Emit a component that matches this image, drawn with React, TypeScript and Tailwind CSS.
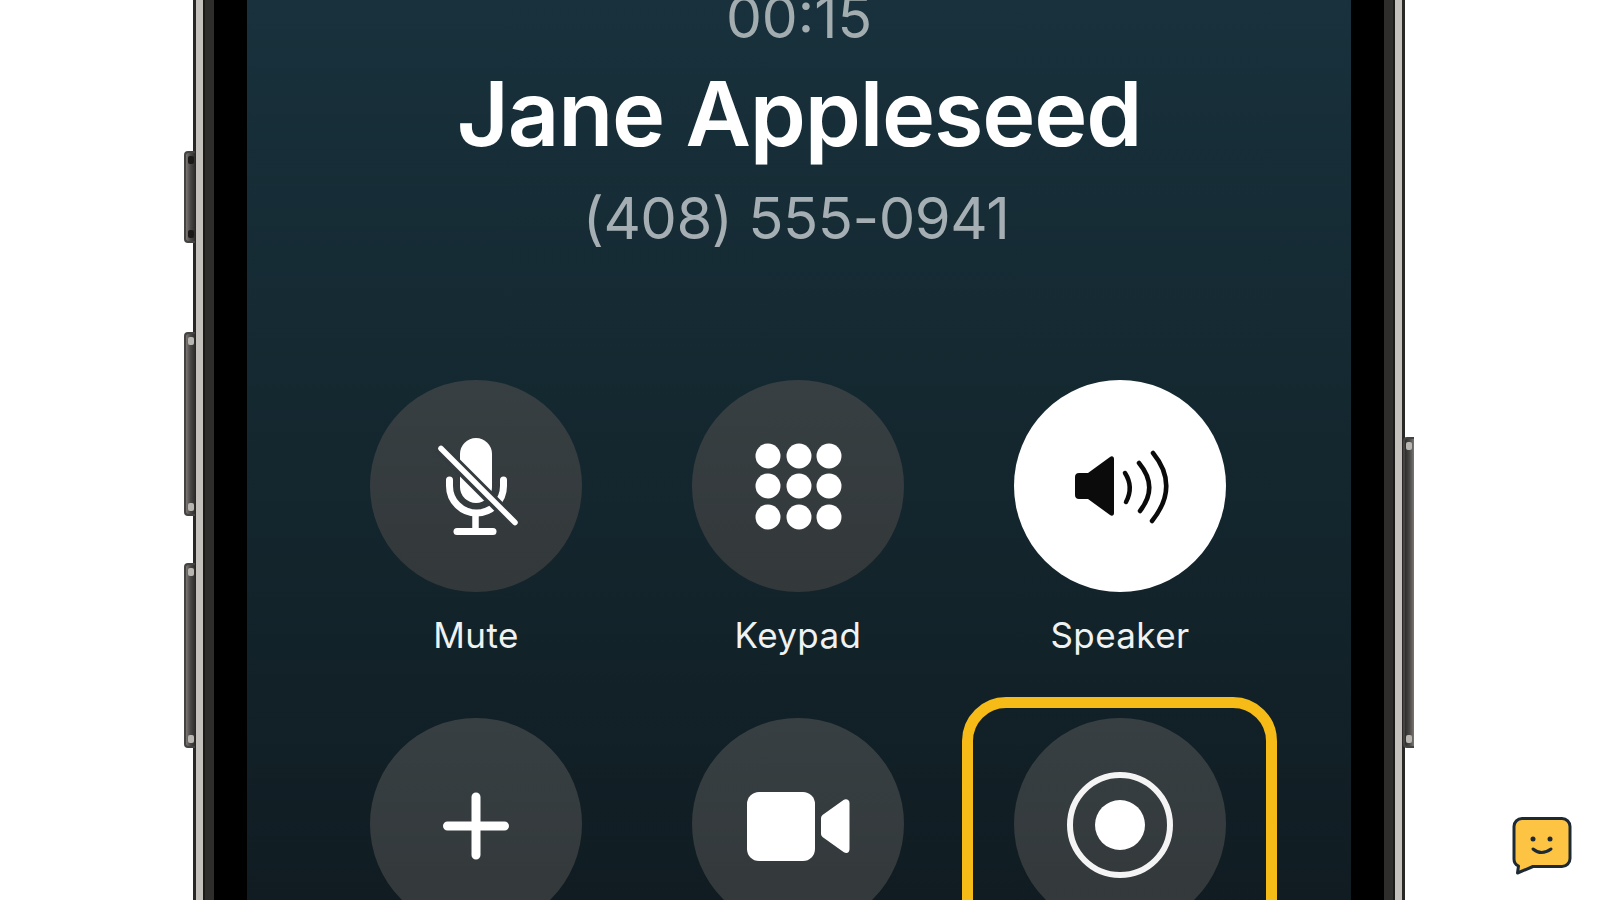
import React from 'react';

const FONT = 'font-["Inter","Noto_Sans",sans-serif]';

const MuteIcon = () => (
  <svg viewBox="0 0 212 212" className="w-[212px] h-[212px]">
    <rect x="90" y="58" width="32" height="65" rx="16" fill="#fff" />
    <path d="M79.500 100v6a27 27 0 0 0 54 0v-6" fill="none" stroke="#fff" strokeWidth="7" strokeLinecap="round" />
    <path d="M105.500 132v18" stroke="#fff" strokeWidth="6.500" />
    <path d="M87 151.500h36" stroke="#fff" strokeWidth="7" strokeLinecap="round" />
    <path d="M69 67l77 77" stroke="#343b3e" strokeWidth="12" />
    <path d="M71 68.500l74 74" stroke="#fff" strokeWidth="5.500" strokeLinecap="round" />
  </svg>
);

const KeypadIcon = () => {
  const xs = [76, 107, 137];
  const ys = [76, 106, 137];
  return (
    <svg viewBox="0 0 212 212" className="w-[212px] h-[212px]">
      {ys.map((y) => xs.map((x) => <circle key={`${x}-${y}`} cx={x} cy={y} r="12.500" fill="#fff" />))}
    </svg>
  );
};

const SpeakerIcon = () => (
  <svg viewBox="0 0 212 212" className="w-[212px] h-[212px]">
    <path
      d="M65 93h9l22-16c2-1.500 4-.5 4 2v54c0 2.500-2 3.500-4 2l-22-16h-9c-2.500 0-4-1.500-4-4V97c0-2.500 1.500-4 4-4z"
      fill="#0b0b0b"
    />
    <g fill="none" stroke="#0b0b0b" strokeWidth="4.500" strokeLinecap="round">
      <path d="M111 93q9 14 1 29" />
      <path d="M125 83q20 24 1 48" />
      <path d="M139 73q27 33 -1 68" />
    </g>
  </svg>
);

const PlusIcon = () => (
  <svg viewBox="0 0 212 212" className="w-[212px] h-[212px]">
    <path d="M106 79v58M77.500 108h57" stroke="#fff" strokeWidth="9" strokeLinecap="round" />
  </svg>
);

const VideoIcon = () => (
  <svg viewBox="0 0 212 212" className="w-[212px] h-[212px]">
    <rect x="55" y="74" width="68" height="69" rx="12" fill="#fff" />
    <path
      d="M129 100c0-1 .5-2 1.500-3l21-15c2.500-1.500 6-.5 6 3v46c0 4-3 5-6 3l-21-15c-1-1-1.500-2-1.500-3z"
      fill="#fff"
    />
  </svg>
);

const RecordIcon = () => (
  <svg viewBox="0 0 212 212" className="w-[212px] h-[212px]">
    <circle cx="106" cy="107" r="50" fill="none" stroke="#f4f4f4" strokeWidth="6" />
    <circle cx="106" cy="107" r="25" fill="#fff" />
  </svg>
);

const SideButton = ({ className, caps }: { className: string; caps: string }) => (
  <div className={`absolute w-[11px] border-2 border-[#454341] bg-gradient-to-r from-[#7a7775] via-[#4a4846] to-[#2f2d2c] flex flex-col justify-between py-[3px] items-center ${className}`}>
    <div className={`w-[6px] h-[8px] rounded-[2px] ${caps}`} />
    <div className={`w-[6px] h-[8px] rounded-[2px] ${caps}`} />
  </div>
);

const CallButton = ({
  label,
  active,
  highlight,
  children,
}: {
  label?: string;
  active?: boolean;
  highlight?: boolean;
  children: React.ReactNode;
}) => (
  <div className="relative flex flex-col items-center">
    {highlight && (
      <div className="absolute left-[-52px] top-[-21px] w-[315px] h-[420px] border-[11px] border-[#f6bb16] rounded-[44px]" />
    )}
    <div className={`w-[212px] h-[212px] rounded-full ${active ? 'bg-white' : 'bg-gradient-to-b from-[#373f42] to-[#33383a]'}`}>
      {children}
    </div>
    {label && <div className="mt-[23px] text-[35px] leading-[40px] tracking-[0.4px] text-[#f0f2f2]">{label}</div>}
  </div>
);

export default function App() {
  return (
    <div className={`h-screen overflow-hidden bg-white ${FONT}`}>
      <div className="relative ml-[193px] w-[1212px] h-[900px]">
        {/* side buttons */}
        <SideButton className="left-[-9px] top-[151px] h-[92px] rounded-l-[4px] border-r-0" caps="bg-[#1a1918]" />
        <SideButton className="left-[-9px] top-[332px] h-[184px] rounded-l-[4px] border-r-0" caps="bg-[#b9b6b1]" />
        <SideButton className="left-[-9px] top-[563px] h-[185px] rounded-l-[4px] border-r-0" caps="bg-[#b9b6b1]" />
        <SideButton className="right-[-9px] top-[437px] h-[311px] rounded-r-[4px] border-l-0 rotate-180" caps="bg-[#b9b6b1]" />

        {/* frame rings */}
        <div className="h-full border-x-[3px] border-[#2a2827]">
          <div className="h-full border-x-[7px] border-[#c4c0bb]">
            <div className="h-full border-x-[2px] border-[#1b1a19]">
              <div className="h-full border-x-[9px] border-[#2f2d2b]">
                <div className="h-full border-x-[33px] border-black">
                  <div className="h-full bg-gradient-to-b from-[#18313c] via-[#14272f] to-[#101c22] flex flex-col items-center overflow-hidden">
                    <div className="mt-[-14px] text-[57px] leading-[64px] text-[#a3adb0]">00:15</div>
                    <div className="mt-[14px] text-[90px] leading-[100px] font-semibold text-white tracking-[-1.2px]">Jane Appleseed</div>
                    <div className="mt-[22px] pr-[6px] text-[58px] leading-[64px] tracking-[-0.5px] text-[#a5afb3]">(408) 555-0941</div>
                    <div className="mt-[130px] grid grid-cols-3 w-[856px] gap-x-[110px] gap-y-[63px] self-start ml-[123px]">
                      <CallButton label="Mute"><MuteIcon /></CallButton>
                      <CallButton label="Keypad"><KeypadIcon /></CallButton>
                      <CallButton label="Speaker" active><SpeakerIcon /></CallButton>
                      <CallButton><PlusIcon /></CallButton>
                      <CallButton><VideoIcon /></CallButton>
                      <CallButton highlight><RecordIcon /></CallButton>
                    </div>
                  </div>
                </div>
              </div>
            </div>
          </div>
        </div>
      </div>

      {/* chat widget */}
      <svg viewBox="0 0 60 60" className="absolute left-[1512px] top-[815px] w-[60px] h-[60px]">
        <path
          d="M10 3.500h40a8 8 0 0 1 8 8v32a8 8 0 0 1-8 8H21L5.500 58l1-7A8 8 0 0 1 2 43.500v-32a8 8 0 0 1 8-8z"
          fill="#fdc342"
          stroke="#1e2a33"
          strokeWidth="3"
          strokeLinejoin="round"
        />
        <circle cx="21" cy="24" r="2.500" fill="#1e2a33" />
        <circle cx="38" cy="24" r="2.500" fill="#1e2a33" />
        <path d="M21 34q8.500 7 18 0" fill="none" stroke="#1e2a33" strokeWidth="3" strokeLinecap="round" />
      </svg>
    </div>
  );
}
